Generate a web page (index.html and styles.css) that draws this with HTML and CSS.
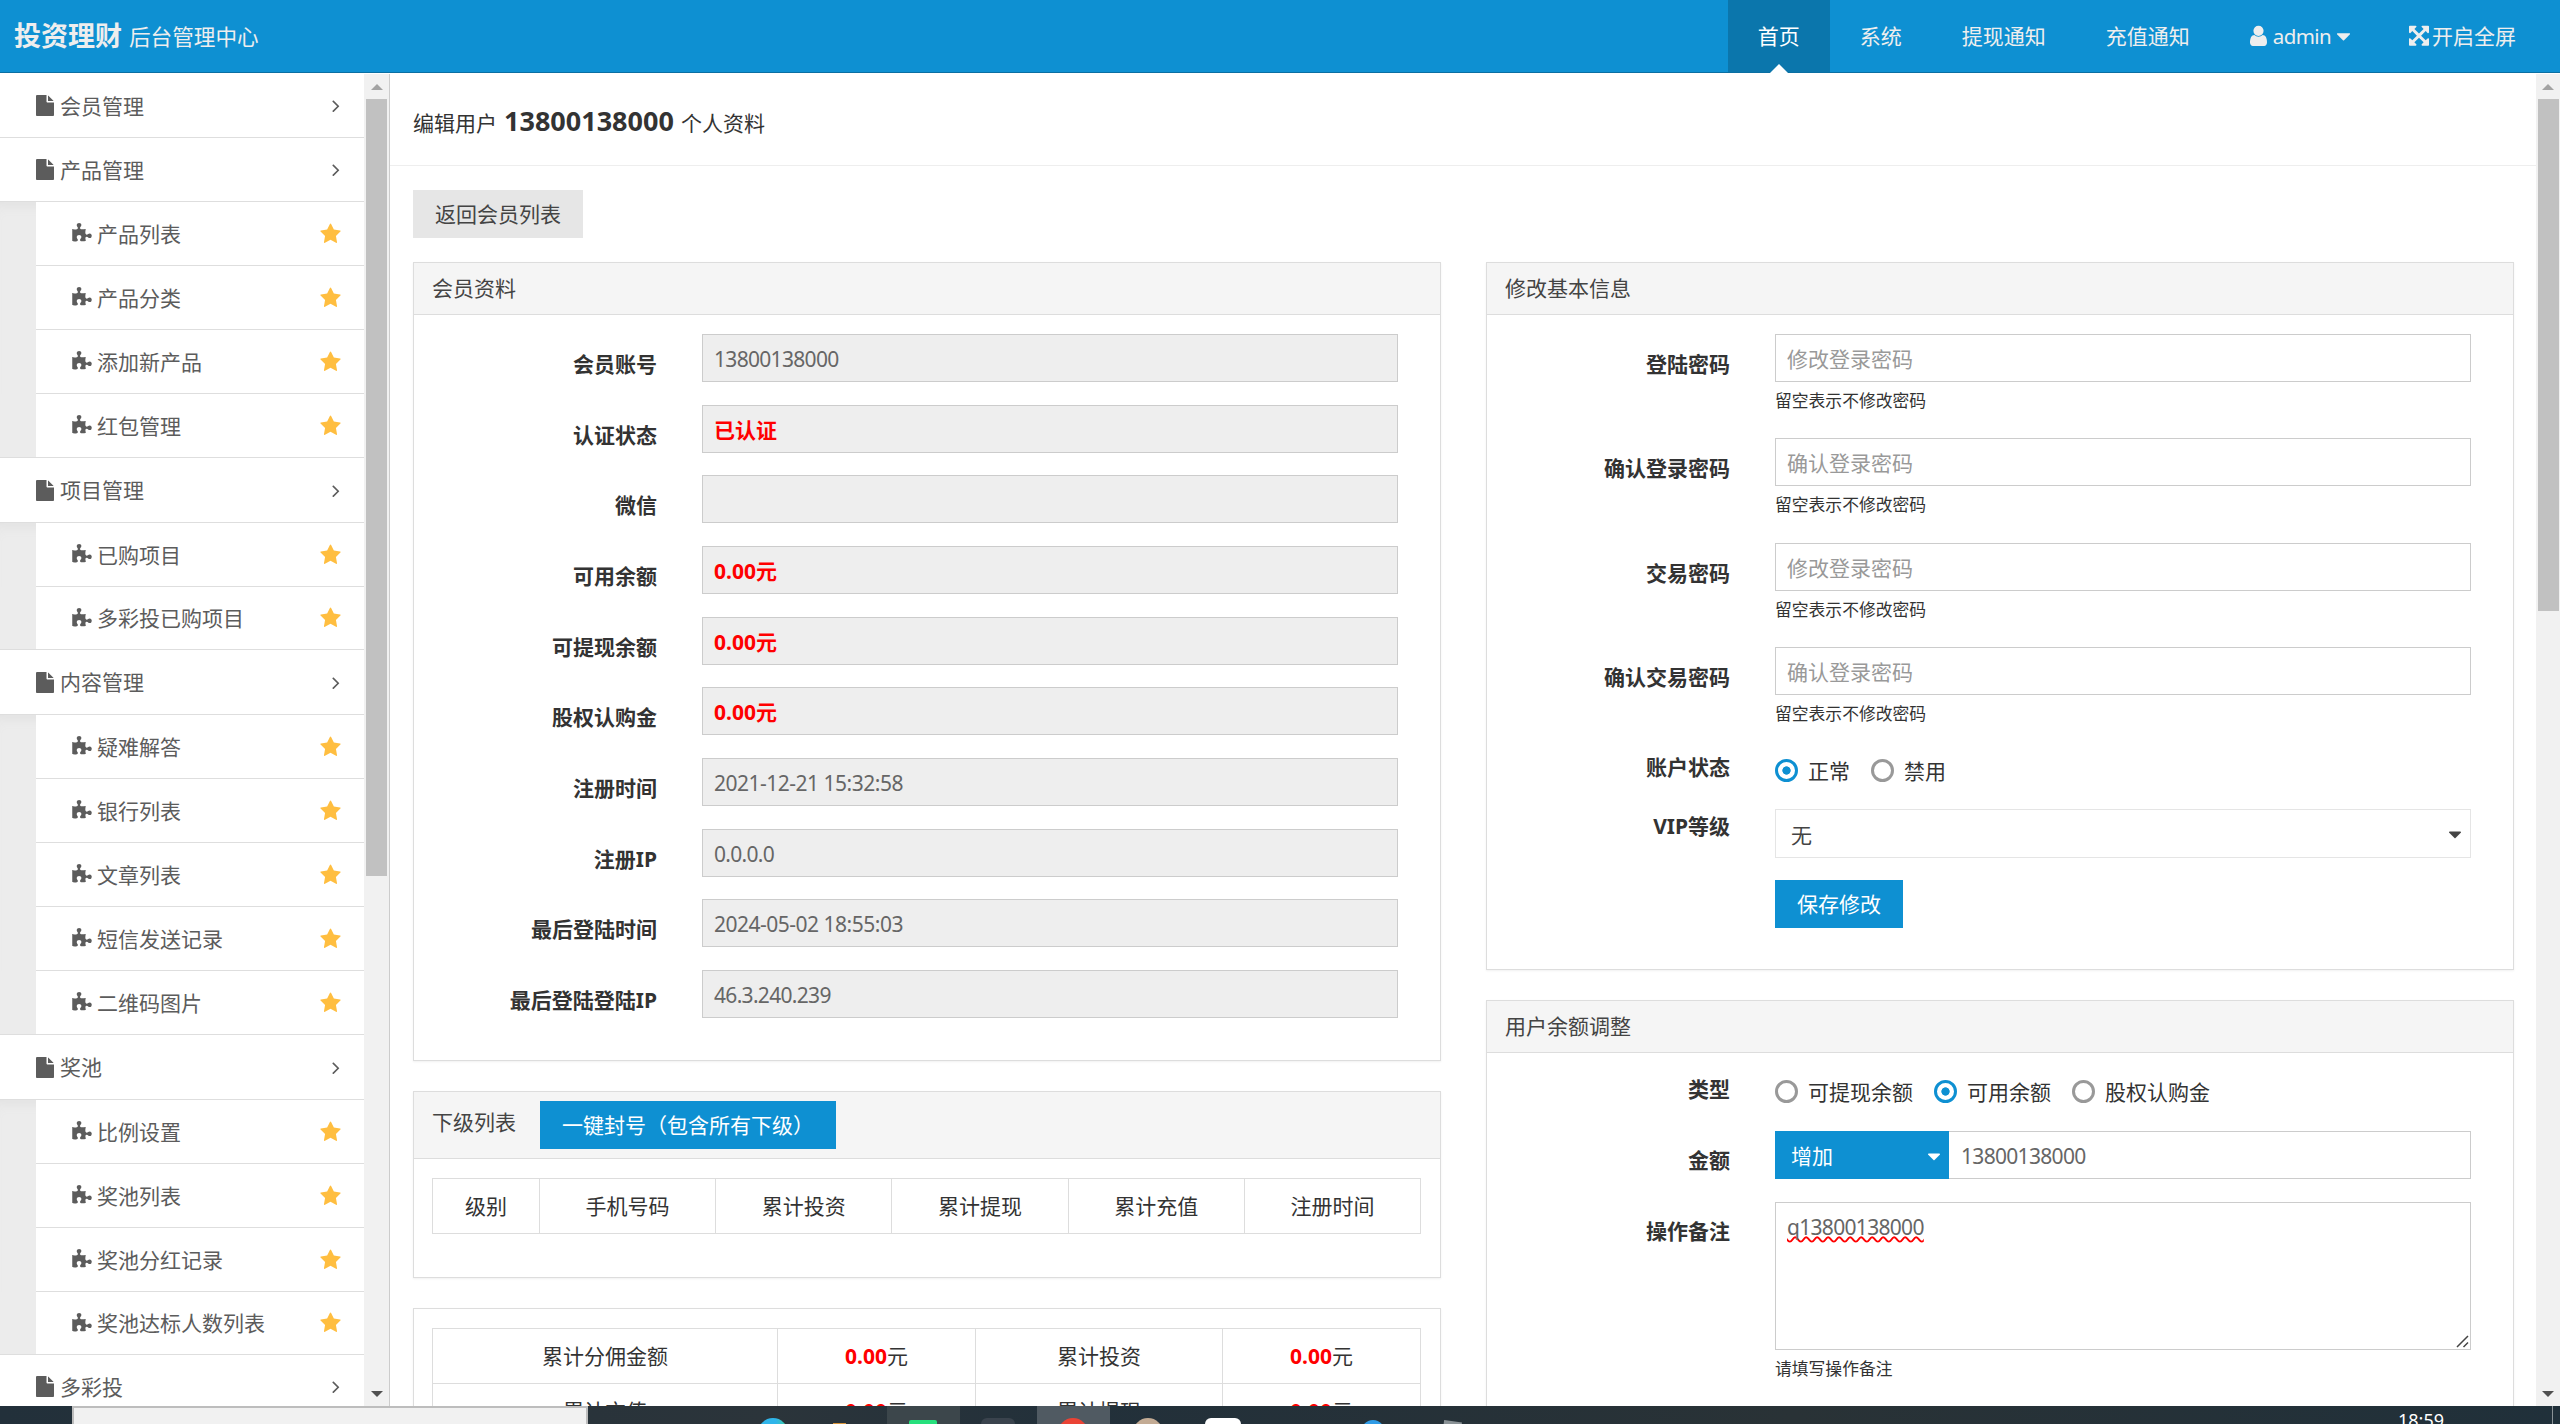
FILE: index.html
```html
<!DOCTYPE html>
<html lang="zh-CN">
<head>
<meta charset="utf-8">
<title>投资理财 后台管理中心</title>
<link rel="stylesheet" href="styles.css">
</head>
<body>
<svg class="defs" aria-hidden="true">
  <symbol id="file" viewBox="128 0 1536 1792"><path d="M1152 512v-472q22 14 36 28l408 408q14 14 28 36h-472zM1024 544q0 40 28 68t68 28h544v1056q0 40-28 68t-68 28h-1344q-40 0-68-28t-28-68v-1600q0-40 28-68t68-28h800v544z"/></symbol>
  <symbol id="star" viewBox="64 0 1664 1792"><path d="M1728 647q0 22-26 48l-363 354 86 500q1 7 1 20 0 21-10.5 35.5t-30.5 14.5q-19 0-40-12l-449-236-449 236q-22 12-40 12-21 0-31.5-14.5t-10.5-35.5q0-6 2-20l86-500-364-354q-25-27-25-48 0-37 56-46l502-73 225-455q19-41 49-41t49 41l225 455 502 73q56 9 56 46z"/></symbol>
  <symbol id="angle" viewBox="576 0 640 1792"><path d="M1171 960q0 13-10 23l-466 466q-10 10-23 10t-23-10l-50-50q-10-10-10-23t10-23l393-393-393-393q-10-10-10-23t10-23l50-50q10-10 23-10t23 10l466 466q10 10 10 23z"/></symbol>
  <symbol id="caret" viewBox="384 0 1024 1792"><path d="M1408 704q0 26-19 45l-448 448q-19 19-45 19t-45-19l-448-448q-19-19-19-45t19-45 45-19h896q26 0 45 19t19 45z"/></symbol>
  <symbol id="user" viewBox="256 0 1280 1792"><path d="M1536 1399q0 109-62.5 187t-150.5 78h-854q-88 0-150.5-78t-62.5-187q0-85 8.5-160.5t31.5-152 58.5-131 94-89 134.5-34.5q131 128 313 128t313-128q76 0 134.5 34.5t94 89 58.5 131 31.5 152 8.5 160.5zm-256-887q0 159-112.5 271.5t-271.5 112.5-271.5-112.5-112.5-271.5 112.5-271.5 271.5-112.5 271.5 112.5 112.5 271.5z"/></symbol>
  <symbol id="arrows" viewBox="128 0 1536 1792"><path d="M1411 541l-355 355 355 355 144-144q29-31 70-14 39 17 39 59v448q0 26-19 45t-45 19h-448q-42 0-59-40-17-39 14-69l144-144-355-355-355 355 144 144q31 30 14 69-17 40-59 40h-448q-26 0-45-19t-19-45v-448q0-42 40-59 39-17 69 14l144 144 355-355-355-355-144 144q-19 19-45 19-12 0-24-5-40-17-40-59v-448q0-26 19-45t45-19h448q42 0 59 40 17 39-14 69l-144 144 355 355 355-355-144-144q-31-30-14-69 17-40 59-40h448q26 0 45 19t19 45v448q0 42-39 59-13 5-25 5-26 0-45-19z"/></symbol>
  <symbol id="puzzle" viewBox="64 0 1664 1792"><path d="M1728 1098q0 81-44.5 135t-123.5 54q-41 0-77.5-17.5t-59-38-56.5-38-71-17.5q-110 0-110 124 0 39 16 115t15 115v5q-22 0-33 1-34 3-97.5 11.5t-115.5 13.5-98 5q-61 0-103-26.5t-42-83.5q0-37 17.5-71t38-56.5 38-59 17.5-77.5q0-79-54-123.5t-135-44.5q-84 0-143 45.5t-59 127.5q0 43 15 83t33.5 64.5 33.5 53 15 50.5q0 45-46 89-37 35-117 35-95 0-245-24-9-2-27.5-4t-27.5-4l-13-2q-1 0-3-1-2 0-2-1v-1024q2 1 17.5 3.5t34 5 21.5 3.5q150 24 245 24 80 0 117-35 46-44 46-89 0-22-15-50.5t-33.5-53-33.5-64.5-15-83q0-82 59-127.5t144-45.5q80 0 134 44.5t54 123.5q0 41-17.5 77.5t-38 59-38 56.5-17.5 71q0 57 42 83.5t103 26.5q64 0 180-15t163-17v2q-1 2-3.5 17.5t-5 34-3.5 21.5q-24 150-24 245 0 80 35 117 44 46 89 46 22 0 50.5-15t53-33.5 64.5-33.5 83-15q82 0 127.5 59t45.5 143z"/></symbol>
</svg>

<header class="topbar">
  <div class="brand"><strong>投资理财</strong> <small>后台管理中心</small></div>
  <nav class="tabs">
    <a class="tab active">首页</a>
    <a class="tab">系统</a>
    <a class="tab">提现通知</a>
    <a class="tab">充值通知</a>
    <a class="tab account"><svg class="i-user"><use href="#user"/></svg><span class="latin">admin</span><svg class="i-caret"><use href="#caret"/></svg></a>
    <a class="tab screen"><svg class="i-arrows"><use href="#arrows"/></svg><span>开启全屏</span></a>
  </nav>
</header>

<main class="frame">
  <aside class="sidebar">
    <div class="group"><svg class="i-file"><use href="#file"/></svg><span>会员管理</span><svg class="i-angle"><use href="#angle"/></svg></div>
    <div class="group"><svg class="i-file"><use href="#file"/></svg><span>产品管理</span><svg class="i-angle"><use href="#angle"/></svg></div>
    <div class="sub">
      <div class="item"><svg class="i-puzzle"><use href="#puzzle"/></svg><span>产品列表</span><svg class="i-star"><use href="#star"/></svg></div>
      <div class="item"><svg class="i-puzzle"><use href="#puzzle"/></svg><span>产品分类</span><svg class="i-star"><use href="#star"/></svg></div>
      <div class="item"><svg class="i-puzzle"><use href="#puzzle"/></svg><span>添加新产品</span><svg class="i-star"><use href="#star"/></svg></div>
      <div class="item"><svg class="i-puzzle"><use href="#puzzle"/></svg><span>红包管理</span><svg class="i-star"><use href="#star"/></svg></div>
    </div>
    <div class="group tall"><svg class="i-file"><use href="#file"/></svg><span>项目管理</span><svg class="i-angle"><use href="#angle"/></svg></div>
    <div class="sub">
      <div class="item"><svg class="i-puzzle"><use href="#puzzle"/></svg><span>已购项目</span><svg class="i-star"><use href="#star"/></svg></div>
      <div class="item short"><svg class="i-puzzle"><use href="#puzzle"/></svg><span>多彩投已购项目</span><svg class="i-star"><use href="#star"/></svg></div>
    </div>
    <div class="group tall"><svg class="i-file"><use href="#file"/></svg><span>内容管理</span><svg class="i-angle"><use href="#angle"/></svg></div>
    <div class="sub">
      <div class="item"><svg class="i-puzzle"><use href="#puzzle"/></svg><span>疑难解答</span><svg class="i-star"><use href="#star"/></svg></div>
      <div class="item"><svg class="i-puzzle"><use href="#puzzle"/></svg><span>银行列表</span><svg class="i-star"><use href="#star"/></svg></div>
      <div class="item"><svg class="i-puzzle"><use href="#puzzle"/></svg><span>文章列表</span><svg class="i-star"><use href="#star"/></svg></div>
      <div class="item"><svg class="i-puzzle"><use href="#puzzle"/></svg><span>短信发送记录</span><svg class="i-star"><use href="#star"/></svg></div>
      <div class="item"><svg class="i-puzzle"><use href="#puzzle"/></svg><span>二维码图片</span><svg class="i-star"><use href="#star"/></svg></div>
    </div>
    <div class="group tall"><svg class="i-file"><use href="#file"/></svg><span>奖池</span><svg class="i-angle"><use href="#angle"/></svg></div>
    <div class="sub">
      <div class="item"><svg class="i-puzzle"><use href="#puzzle"/></svg><span>比例设置</span><svg class="i-star"><use href="#star"/></svg></div>
      <div class="item"><svg class="i-puzzle"><use href="#puzzle"/></svg><span>奖池列表</span><svg class="i-star"><use href="#star"/></svg></div>
      <div class="item"><svg class="i-puzzle"><use href="#puzzle"/></svg><span>奖池分红记录</span><svg class="i-star"><use href="#star"/></svg></div>
      <div class="item short"><svg class="i-puzzle"><use href="#puzzle"/></svg><span>奖池达标人数列表</span><svg class="i-star"><use href="#star"/></svg></div>
    </div>
    <div class="group"><svg class="i-file"><use href="#file"/></svg><span>多彩投</span><svg class="i-angle"><use href="#angle"/></svg></div>
  </aside>
  <div class="scroll scroll-side"><i class="up"></i><i class="thumb"></i><i class="down"></i></div>

  <section class="content">
    <h1 class="page-title"><span>编辑用户</span><strong>13800138000</strong><span>个人资料</span></h1>
    <div class="page-body">
      <button class="btn btn-default">返回会员列表</button>
      <div class="columns">
        <div class="column">
          <section class="panel">
            <h2 class="panel-hd">会员资料</h2>
            <div class="panel-bd">
              <div class="row"><label>会员账号</label><div class="field num">13800138000</div></div>
              <div class="row"><label>认证状态</label><div class="field red">已认证</div></div>
              <div class="row"><label>微信</label><div class="field"></div></div>
              <div class="row"><label>可用余额</label><div class="field red">0.00元</div></div>
              <div class="row"><label>可提现余额</label><div class="field red">0.00元</div></div>
              <div class="row"><label>股权认购金</label><div class="field red">0.00元</div></div>
              <div class="row"><label>注册时间</label><div class="field num date">2021-12-21 15:32:58</div></div>
              <div class="row"><label>注册IP</label><div class="field num">0.0.0.0</div></div>
              <div class="row"><label>最后登陆时间</label><div class="field num date">2024-05-02 18:55:03</div></div>
              <div class="row"><label>最后登陆登陆IP</label><div class="field num">46.3.240.239</div></div>
            </div>
          </section>
          <section class="panel subordinates">
            <div class="panel-hd with-button"><h2>下级列表</h2><button class="btn btn-primary">一键封号（包含所有下级）</button></div>
            <div class="panel-bd">
              <div class="table levels"><span>级别</span><span>手机号码</span><span>累计投资</span><span>累计提现</span><span>累计充值</span><span>注册时间</span></div>
            </div>
          </section>
          <section class="panel totals">
            <div class="panel-bd">
              <div class="table sums">
                <span>累计分佣金额</span><span><b>0.00</b>元</span><span>累计投资</span><span><b>0.00</b>元</span>
                <span>累计充值</span><span><b>0.00</b>元</span><span>累计提现</span><span><b>0.00</b>元</span>
              </div>
            </div>
          </section>
        </div>

        <div class="column">
          <section class="panel basics">
            <h2 class="panel-hd">修改基本信息</h2>
            <div class="panel-bd">
              <div class="row pw"><label>登陆密码</label><div><div class="field edit hint">修改登录密码</div><small>留空表示不修改密码</small></div></div>
              <div class="row pw"><label>确认登录密码</label><div><div class="field edit hint">确认登录密码</div><small>留空表示不修改密码</small></div></div>
              <div class="row pw"><label>交易密码</label><div><div class="field edit hint">修改登录密码</div><small>留空表示不修改密码</small></div></div>
              <div class="row pw"><label>确认交易密码</label><div><div class="field edit hint">确认登录密码</div><small>留空表示不修改密码</small></div></div>
              <div class="row state"><label>账户状态</label><div class="radios"><i class="radio on"></i><span>正常</span><i class="radio"></i><span>禁用</span></div></div>
              <div class="row vip"><label>VIP等级</label><div class="select"><span>无</span><svg class="i-caret"><use href="#caret"/></svg></div></div>
              <div class="row"><label></label><button class="btn btn-primary">保存修改</button></div>
            </div>
          </section>
          <section class="panel balance">
            <h2 class="panel-hd">用户余额调整</h2>
            <div class="panel-bd">
              <div class="row kind"><label>类型</label><div class="radios"><i class="radio"></i><span>可提现余额</span><i class="radio on"></i><span>可用余额</span><i class="radio"></i><span>股权认购金</span></div></div>
              <div class="row amount"><label>金额</label><div class="combo"><div class="select primary"><span>增加</span><svg class="i-caret"><use href="#caret"/></svg></div><div class="field edit num">13800138000</div></div></div>
              <div class="row memo"><label>操作备注</label><div><div class="area num"><span class="typo">q13800138000</span><svg class="grip" viewBox="0 0 13 13"><path d="M1 12L12 1M7.500 12L12 7.500"/></svg></div><small>请填写操作备注</small></div></div>
            </div>
          </section>
        </div>
      </div>
    </div>
  </section>
  <div class="scroll scroll-main"><i class="up"></i><i class="thumb"></i><i class="down"></i></div>
</main>

<footer class="taskbar">
  <div class="status"></div>
  <i class="app edge"></i><i class="app folder"></i>
  <i class="tile t1"></i><i class="app green"></i><i class="app dark"></i>
  <i class="tile t2"></i><i class="app chrome"></i><i class="app tan"></i><i class="app white"></i><i class="app blue"></i><i class="app gray"></i>
  <span class="clock">18:59</span><i class="peek"></i>
</footer>
</body>
</html>
```
FILE: styles.css
```css
* { box-sizing: border-box; }
html, body { margin: 0; height: 100%; overflow: hidden; }
body {
  display: flex; flex-direction: column;
  font: 400 21px/32px "Noto Sans", "Noto Sans CJK SC", sans-serif;
  color: #333; background: #fff;
}
h1, h2 { margin: 0; font: inherit; }
i { display: block; }
svg { display: block; fill: currentColor; flex: none; }
span, strong, small, b, label { white-space: nowrap; }
.defs { position: absolute; width: 0; height: 0; }

/* top bar */
.topbar {
  flex: none; height: 73px; background: #0e90d2; border-bottom: 1px solid #0b6fa2;
  display: flex; justify-content: space-between; color: #eee;
}
.brand { display: flex; align-items: center; gap: 7px; padding-left: 14px; }
.brand strong { font-size: 27px; font-weight: 700; line-height: 72px; }
.brand small { font-size: 21.600px; padding-top: 1px; }
.tabs { display: flex; margin-right: 14px; }
.tab { height: 72px; padding: 0 30px; display: flex; align-items: center; }
.tab.active { background: #0b76ac; color: #fff; position: relative; }
.tab.active::after {
  content: ""; position: absolute; left: 42px; bottom: -1px;
  border: solid transparent; border-width: 0 9px 9px; border-bottom-color: #fff;
}
.latin { font-weight: 400; font-size: 20.500px; letter-spacing: -.6px; }
.i-user { width: 17px; height: 23.800px; margin-right: 6px; }
.account .i-caret { width: 13px; height: 22.750px; margin-left: 6px; }
.i-arrows { width: 20px; height: 23.300px; margin: 0 3px 0 -1px; }
.tab.screen { padding-right: 30px; }

/* frame and scroll bars */
.frame { flex: none; height: 1333px; display: flex; overflow: hidden; }
.scroll { flex: none; background: #f1f1f1; display: flex; flex-direction: column; align-items: center; margin-top: 1px; }
.scroll-side { width: 26px; border-right: 1px solid #ccc; }
.scroll-main { width: 24px; }
.up { flex: none; width: 0; height: 0; margin-top: 10px; border: solid transparent; border-width: 0 6px 6px; border-bottom-color: #a3a3a3; }
.thumb { flex: none; width: 21px; margin-top: 9px; background: #c1c1c1; }
.scroll-side .thumb { height: 777px; }
.scroll-main .thumb { height: 512px; }
.down { flex: none; width: 0; height: 0; margin: auto 0 9px; border: solid transparent; border-width: 6px 6px 0; border-top-color: #505050; }

/* side menu */
.sidebar { flex: none; width: 364px; padding-top: 1px; color: #5c5c5c; }
.group, .item { height: 64px; display: flex; align-items: center; border-bottom: 1px solid #dedede; background: #fff; }
.group { padding: 0 24px 0 36px; }
.item { padding: 0 23px 0 36px; }
.group.tall { height: 65px; }
.item.short { height: 63px; }
.sub { padding-left: 36px; background: #ececec; box-shadow: inset 0 12px 12px -8px #e2e2e2; }
.sub .item:last-child { margin-left: -36px; padding-left: 72px; background: linear-gradient(90deg, #ececec 36px, #fff 36px); }
.i-file { width: 18px; height: 21px; margin-right: 6px; }
.i-angle { width: 8px; height: 21px; margin-left: auto; }
.i-puzzle { width: 20px; height: 21px; margin-right: 5px; }
.i-star { width: 21px; height: 22px; margin-left: auto; color: #ffbe40; }

/* content */
.content { flex: 1; min-width: 0; }
.page-title { height: 93px; border-bottom: 1px solid #eee; display: flex; align-items: center; padding: 3px 0 0 23px; }
.page-title span { padding-top: 4px; }
.page-title strong { font-size: 27px; font-weight: 700; margin: 0 7px; }
.page-body { padding: 24px 22px 0 23px; }
.btn {
  display: block; height: 48px; padding: 0; border: 0; font: inherit; white-space: nowrap;
}
.btn-default { width: 170px; background: #e6e6e6; color: #444; }
.btn-primary { background: #0e90d2; color: #fff; }
.columns { display: flex; gap: 45px; margin-top: 24px; }
.column { width: 1028px; display: flex; flex-direction: column; gap: 30px; }
.panel { border: 1px solid #ddd; box-shadow: 0 1px 2px rgba(0,0,0,.06); height: 799px; }
.panel-hd { height: 52px; background: #f5f5f5; border-bottom: 1px solid #ddd; padding: 9px 18px; color: #444; }
.panel-bd { padding: 19px 0 0 18px; }
.row { display: flex; height: 70.670px; }
.row label { width: 225px; text-align: right; margin-right: 45px; padding-top: 14px; font-weight: 700; flex: none; }
.field { width: 696px; height: 48px; border: 1px solid #ccc; background: #eee; color: #666; padding: 8px 11px; line-height: 32px; white-space: nowrap; }
.num { font-weight: 400; letter-spacing: -.690px; }
.date { letter-spacing: -.500px; }
.red { color: #f00; font-weight: 700; }
.edit { background: #fff; }
.hint { color: #999; }
.row small { display: block; font-size: 16.800px; line-height: 24px; padding-top: 7px; }

.subordinates { height: 187px; }
.with-button { height: 67px; display: flex; align-items: flex-start; }
.with-button h2 { padding-top: 5px; width: 108px; }
.with-button .btn { width: 296px; }
.table { width: 989px; display: grid; border: solid #ddd; border-width: 1px 0 0 1px; text-align: center; }
.table span { height: 55px; line-height: 55px; border: solid #ddd; border-width: 0 1px 1px 0; }
.table b { color: #f00; font-weight: 700; }
.levels { grid-template-columns: 107px repeat(5, 1fr); }
.sums { grid-template-columns: 345px 198px 247px 1fr; }
.totals { height: 400px; }

.basics { height: 708px; }
.row.pw { height: 104.330px; }
.row.state { height: 57.670px; }
.row.state label { padding-top: 0; }
.row.kind label { padding-top: 1px; }
.radios { display: flex; align-items: center; height: 34px; padding-top: 5px; }
.radio { width: 23px; height: 23px; border: 3px solid #999; border-radius: 50%; margin-right: 10px; flex: none; }
.radio.on { border-color: #0e90d2; background: radial-gradient(circle, #0e90d2 3.800px, #fff 4.500px); }
.radios span { margin-right: 21px; }
.row.vip { height: 71px; }
.row.vip label { padding-top: 1px; }
.select { width: 696px; height: 49px; border: 1px solid #e5e5e5; display: flex; justify-content: space-between; align-items: center; padding: 3px 9px 0 15px; color: #444; }
.select .i-caret { width: 12px; height: 21px; }
.basics .btn { width: 128px; }

.balance { height: 600px; }
.row.kind { height: 59px; }
.row.amount label, .row.memo label { padding-top: 13px; }
.combo { display: flex; }
.combo .field { width: 522px; border-left: 0; padding-left: 12px; }
.select.primary { width: 174px; height: 48px; background: #0e90d2; border: 0; color: #fff; padding: 2px 9px 0 16px; }
.area { width: 696px; height: 148px; border: 1px solid #ccc; padding: 8px 11px; color: #666; position: relative; }
.typo { text-decoration: underline wavy #f00 1.500px; text-decoration-skip-ink: none; text-underline-offset: 1px; }
.grip { position: absolute; right: 1px; bottom: 1px; width: 13px; height: 13px; fill: none; stroke: #444; stroke-width: 1.500; }

/* desktop task bar, icons peek in from the lower edge */
.taskbar { flex: none; height: 18px; position: relative; background: linear-gradient(90deg, #22303a, #2b343a 30%, #22303a 42%, #293236 70%, #20303a); overflow: hidden; }
.taskbar > * { position: absolute; top: 0; }
.status { left: 72px; width: 516px; height: 20px; background: #f1f1f1; border: 2px solid #bdbdbd; }
.app { height: 30px; }
.taskbar .app { top: 12px; }
.edge { left: 758px; width: 30px; border-radius: 50%; background: linear-gradient(90deg, #2fb5ea 60%, #3fd09a); }
.taskbar .folder { left: 833px; width: 13px; top: 17px; background: #d9953a; }
.tile { height: 18px; width: 73px; }
.t1 { left: 887px; background: #3c464b; }
.t2 { left: 1037px; background: #505a62; }
.taskbar .green { left: 909px; width: 28px; top: 14px; border-radius: 2px; background: #26e07c; }
.dark { left: 981px; width: 34px; border-radius: 6px; background: #3a434d; }
.chrome { left: 1058px; width: 30px; border-radius: 50%; background: #ea4335; }
.tan { left: 1133px; width: 30px; border-radius: 50%; background: #c3ab94; }
.white { left: 1205px; width: 36px; border-radius: 6px; background: #fff; }
.taskbar .blue { left: 1360px; width: 26px; top: 14px; border-radius: 50%; background: #2f9be6; }
.taskbar .gray { left: 1442px; width: 18px; top: 15px; background: #8a9296; transform: rotate(8deg); }
.clock { left: 2398px; color: #fff; font-size: 18px; line-height: 24px; font-weight: 400; padding-top: 2px; }
.peek { left: 2552px; width: 1px; height: 18px; background: #8a9296; }
```
